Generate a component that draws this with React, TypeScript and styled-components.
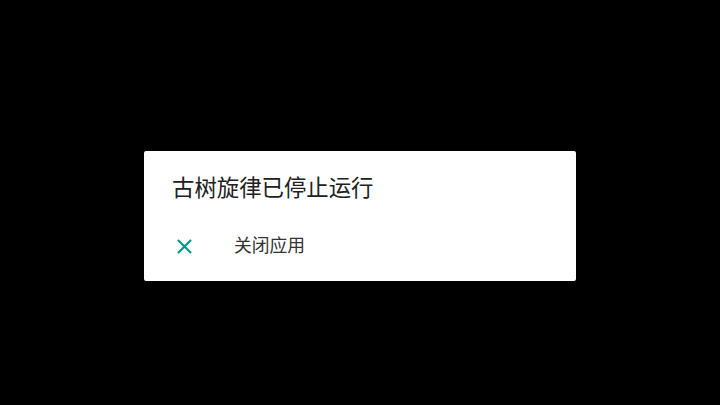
import React from 'react';
import styled, { createGlobalStyle } from 'styled-components';

const GlobalStyle = createGlobalStyle`
  html, body {
    margin: 0;
    padding: 0;
    background: #000000;
    width: 100%;
    height: 100%;
    overflow: hidden;
  }
  body {
    font-family: Roboto, "Noto Sans CJK SC", sans-serif;
  }
`;

const Screen = styled.div`
  width: 720px;
  height: 405px;
  background: #000000;
  display: flex;
  justify-content: center;
  align-items: flex-start;
  padding-top: 151px;
  box-sizing: border-box;
`;

const Dialog = styled.div`
  width: 432px;
  height: 130px;
  box-sizing: border-box;
  background: #ffffff;
  border-radius: 2px;
  padding: 22px 28px 11px 28px;
  display: flex;
  flex-direction: column;
`;

const Title = styled.div`
  font-family: Roboto, "Noto Sans CJK SC", sans-serif;
  font-size: 22.4px;
  line-height: 30px;
  color: #212121;
`;

const ActionRow = styled.div`
  margin-top: 19px;
  height: 48px;
  display: flex;
  align-items: center;
  gap: 37px;
  cursor: pointer;
`;

const ActionLabel = styled.span`
  font-family: Roboto, "Noto Sans CJK SC", sans-serif;
  font-size: 17.8px;
  line-height: 24px;
  color: #333333;
`;

const CloseIcon: React.FC = () => (
  <svg width="25" height="25" viewBox="0 0 24 24" fill="#009688">
    <path d="M19 6.41 17.59 5 12 10.59 6.41 5 5 6.41 10.59 12 5 17.59 6.41 19 12 13.41 17.59 19 19 17.59 13.41 12z" />
  </svg>
);

const App: React.FC = () => (
  <>
    <GlobalStyle />
    <Screen>
      <Dialog>
        <Title>古树旋律已停止运行</Title>
        <ActionRow>
          <CloseIcon />
          <ActionLabel>关闭应用</ActionLabel>
        </ActionRow>
      </Dialog>
    </Screen>
  </>
);

export default App;
